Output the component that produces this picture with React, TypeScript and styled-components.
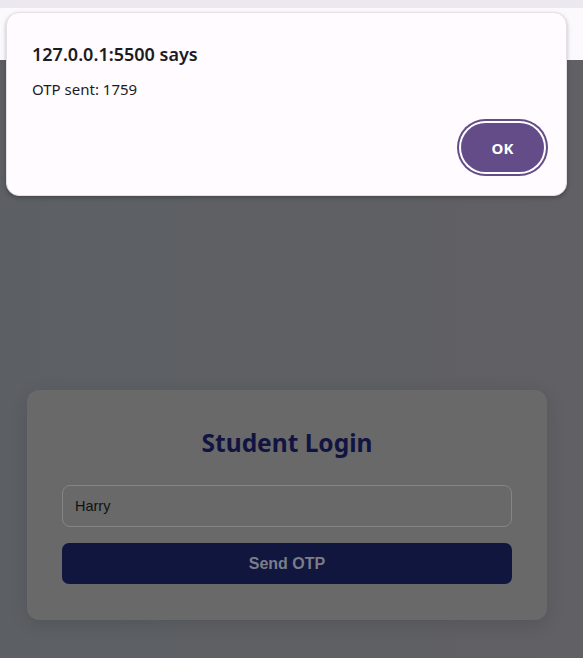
import React from "react";
import styled, { createGlobalStyle } from "styled-components";

const Global = createGlobalStyle`
  html, body { margin: 0; padding: 0; }
  body { width: 583px; height: 658px; overflow: hidden; font-family: "Noto Sans", "Open Sans", sans-serif; }
  * { box-sizing: border-box; }
`;

const Screen = styled.div`
  position: relative;
  width: 583px;
  height: 658px;
  display: flex;
  flex-direction: column;
  overflow: hidden;
`;

const ChromeStrip = styled.div`
  height: 8px;
  background: #ebe8ef;
  flex: none;
`;

const Toolbar = styled.div`
  height: 52px;
  background: #fcf9fd;
  flex: none;
`;

const DimmedPage = styled.main`
  flex: 1;
  background: linear-gradient(90deg, #5c6064 0%, #5f6064 50%, #616064 100%);
  display: flex;
  justify-content: flex-start;
  padding: 330px 0 0 27px;
`;

const Card = styled.section`
  width: 520px;
  height: 230px;
  background: #696969;
  border-radius: 12px;
  padding: 37px 35px 31px;
  box-shadow: 0 4px 18px rgba(0, 0, 0, 0.12);
  display: flex;
  flex-direction: column;
`;

const CardTitle = styled.h2`
  margin: 0 0 26px;
  text-align: center;
  font-family: "Noto Sans", "Open Sans", sans-serif;
  font-weight: 700;
  font-size: 24.5px;
  line-height: 32px;
  color: #111341;
`;

const NameInput = styled.input`
  height: 42px;
  width: 100%;
  flex: none;
  border: 1px solid #858585;
  border-radius: 8px;
  background: #696969;
  padding: 0 12px;
  font-family: "Liberation Sans", Arial, sans-serif;
  font-size: 14.5px;
  color: #111;
  outline: none;
  margin-bottom: 16px;
`;

const SendButton = styled.button`
  height: 41px;
  width: 100%;
  flex: none;
  border: none;
  border-radius: 7px;
  background: #11163f;
  color: #7b7d88;
  font-family: "Liberation Sans", Arial, sans-serif;
  font-weight: 700;
  font-size: 16px;
`;

const Dialog = styled.div`
  position: absolute;
  left: 6px;
  top: 12px;
  width: 561px;
  height: 184px;
  background: #fffbff;
  border: 1px solid #e3e0e6;
  border-radius: 13px;
  box-shadow: 0 2px 4px rgba(0, 0, 0, 0.25);
  padding: 29px 20px 20px 25px;
  display: flex;
  flex-direction: column;
`;

const DialogTitle = styled.div`
  font-family: "Noto Sans", "Open Sans", sans-serif;
  font-weight: 600;
  font-size: 18px;
  line-height: 24px;
  color: #1c1b1f;
  margin-bottom: 13px;
`;

const DialogMessage = styled.div`
  font-family: "Noto Sans", "Open Sans", sans-serif;
  font-size: 15px;
  line-height: 20px;
  color: #1c1b1f;
`;

const DialogActions = styled.div`
  margin-top: auto;
  display: flex;
  justify-content: flex-end;
  padding-right: 2px;
  padding-bottom: 3px;
`;

const OkButton = styled.button`
  width: 83px;
  height: 49px;
  border: none;
  border-radius: 999px;
  background: #634c87;
  color: #ffffff;
  font-family: "Noto Sans", "Open Sans", sans-serif;
  font-weight: 700;
  font-size: 15px;
  box-shadow: 0 0 0 2px #ffffff, 0 0 0 4px #634c87;
`;

export default function App() {
  return (
    <Screen>
      <Global />
      <ChromeStrip />
      <Toolbar />
      <DimmedPage>
        <Card>
          <CardTitle>Student Login</CardTitle>
          <NameInput defaultValue="Harry" />
          <SendButton>Send OTP</SendButton>
        </Card>
      </DimmedPage>
      <Dialog role="alertdialog">
        <DialogTitle>127.0.0.1:5500 says</DialogTitle>
        <DialogMessage>OTP sent: 1759</DialogMessage>
        <DialogActions>
          <OkButton>OK</OkButton>
        </DialogActions>
      </Dialog>
    </Screen>
  );
}
